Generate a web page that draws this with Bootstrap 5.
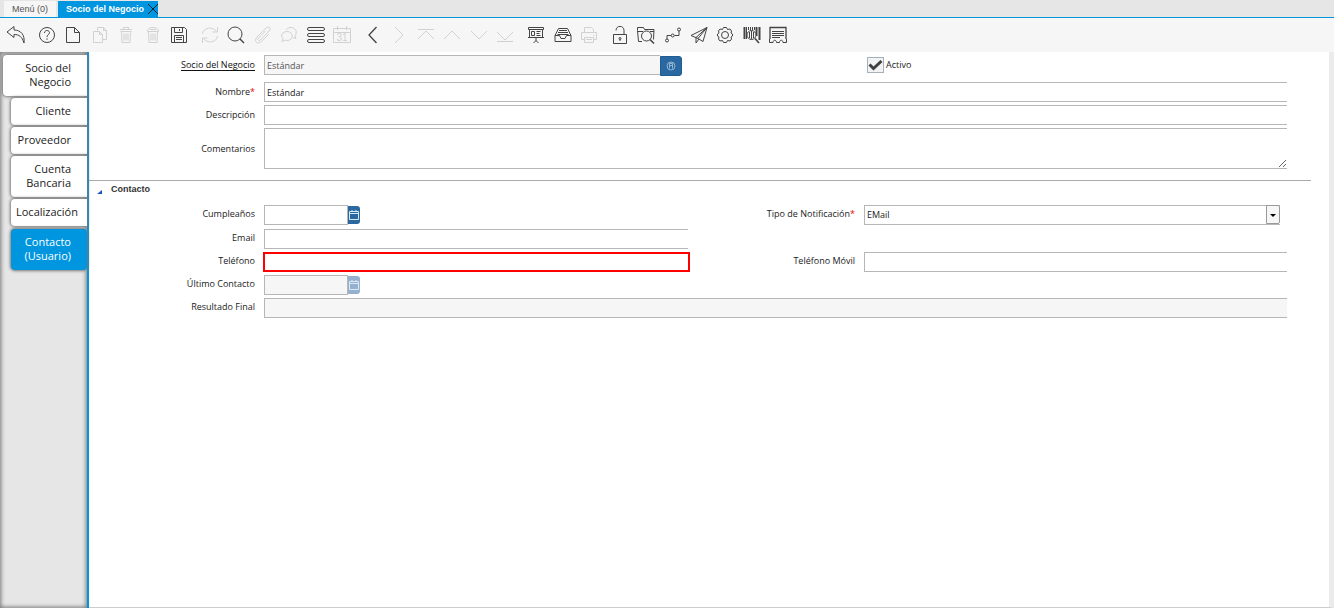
<!DOCTYPE html>
<html lang="es">
<head>
<meta charset="utf-8">
<meta name="viewport" content="width=device-width, initial-scale=1">
<title>Socio del Negocio</title>
<link href="https://cdn.jsdelivr.net/npm/bootstrap@5.3.0/dist/css/bootstrap.min.css" rel="stylesheet">
<style>
:root { --accent: #0095df; --line: #b6b6b6; }
body { font-family: "Open Sans", "Noto Sans", sans-serif; font-size: 9px; line-height: 14px; color: #222; background: #fff; }
button { color: inherit; }
.desk-tabs { height: 18px; padding: 1px 4px 0; gap: 2px; background: #e6e6e6; border-bottom: 1px solid var(--accent); font-family: "Liberation Sans", Arial, sans-serif; }
.desk-tab { border: 0; background: #f6f6f6; color: #555; padding: 0 8px; line-height: 16px; }
.desk-tab.active { background: var(--accent); color: #fff; font-weight: bold; padding-right: 0; }
.desk-tab svg { width: 10px; height: 10px; stroke: #123; }
.toolbar { height: 34px; padding: 0 7px; gap: 13px; background: #f6f6f6; }
.tool-group { width: 150px; }
.tool-group.one { width: 18px; }
.tool-group.three { width: 71px; }
.tool-group.seven { width: 176px; }
.tool { width: 18px; height: 18px; padding: 0; border: 0; background: none; display: block; }
.tool svg { display: block; width: 18px; height: 18px; fill: none; stroke: #444; overflow: visible; }
.tool:disabled { opacity: .2; }
.side { width: 89px; padding: 3px 0 0 3px; gap: 2px; background: #e6e6e6; border-right: 2px solid var(--accent); box-shadow: inset 0 0 4px 1px #777; }
.side-tab { display: block; margin-left: 8px; padding: 6px 16px 7px 5px; border-radius: 4px 0 0 4px; background: #fff; color: #222; font-size: 11px; line-height: 14px; text-align: right; text-decoration: none; box-shadow: 0 0 3px 1px #777; }
.side-tab:first-child { margin-left: 0; padding-left: 16px; }
.side-tab.active { background: var(--accent); color: #fff; border-radius: 4px; margin-top: 1px; -webkit-text-stroke: 0; }
.work { border-right: 5px solid #ebebeb; border-bottom: 1px solid #ccc; }
.sheet { padding-right: 42px; }
.sheet.first { padding-top: 3px; padding-bottom: 11px; }
.form-grid { display: grid; grid-template-columns: 175fr 424fr 176fr 423fr; row-gap: 3px; align-items: center; }
.sheet.first .form-grid { grid-template-rows: 24px; }
.sheet.second .form-grid { grid-template-rows: 21px; }
.sheet.second .form-grid > * { align-self: start; }
.sheet.second .form-grid > label { padding-top: 2px; }
.head-cell { align-self: start; padding-top: 3px; }
.head-cell.tick-cell { padding-top: 2px; }
.span-all { grid-column: 2 / -1; }
.form-grid > label, .form-grid > .lbl { text-align: right; padding-right: 9px; }
.lbl a { color: #111; text-decoration: underline; text-underline-offset: 2px; }
.req { color: #e00; }
.fld { display: block; width: 100%; height: 20px; padding: 0 2px; border: 1px solid var(--line); border-right: 0; border-radius: 0; background: #fff; color: #222; outline: 0; }
.fld:disabled { background: #f6f6f6; color: #555; opacity: 1; }
textarea.fld { height: 41px; resize: vertical; }
.fld.focused { border: 2px solid #f00; width: calc(100% + 3px); margin-left: -1px; }
.search-field { width: 418px; align-self: start; }
.addon { height: 20px; padding: 0; border: 1px solid #1f5c92; border-radius: 0 3px 3px 0; background: #2a68a2; flex: none; }
.addon.find { width: 22px; margin-top: 1px; }
.addon.date { width: 12px; height: 18px; border: 0; }
.addon svg { display: block; margin: auto; fill: none; stroke: #dbe9f5; }
.addon:disabled { background: #94b2d0; }
.date-field { width: 96px; }
.date-field .fld { border-right: 1px solid var(--line); }
.tick { appearance: none; width: 17px; height: 16px; margin: 0 2px 0 3px; border: 1px solid #a3b1bd; background: #f2f2f2 url("data:image/svg+xml,%3Csvg xmlns='http://www.w3.org/2000/svg' viewBox='0 0 15 14'%3E%3Cpath d='M1.5 6.5 5.500 10.500 13.500 3' fill='none' stroke='%23404040' stroke-width='3'/%3E%3C/svg%3E") center / 100% 100%; }
.section-title { height: 25px; margin-right: 18px; padding: 1px 0 0 8px; border-top: 1px solid #aaa; font-family: "Liberation Sans", Arial, sans-serif; font-weight: bold; color: #333; }
.section-title button { border: 0; background: none; padding: 0; font-weight: bold; display: flex; align-items: center; gap: 9px; }
.section-title i { margin-top: 5px; border: solid transparent; border-width: 4px 0 0 5px; border-bottom: 4px solid #1c55c8; border-top: 0; }
.combo { width: calc(100% - 7px); }
.combo select { appearance: none; border-right: 0; }
.combo span { right: 0; top: 0; width: 14px; height: 19px; border: 1px solid #999; border-radius: 0 2px 2px 0; background: #f6f6f6; pointer-events: none; }
.combo span::after { content: ""; position: absolute; left: 3px; top: 8px; border: 3px solid transparent; border-top-color: #000; border-bottom: 0; }
.shell { margin-bottom: 2px; }
</style>
</head>
<body class="d-flex flex-column min-vh-100">
<nav class="desk-tabs d-flex" aria-label="Ventanas">
  <button class="desk-tab" type="button">Menú (0)</button>
  <button class="desk-tab active d-flex align-items-center" type="button">Socio del Negocio <svg viewBox="0 0 10 10" class="ms-1" aria-hidden="true"><path d="M0 0 10 10M10 0 0 10"/></svg></button>
</nav>

<header class="toolbar d-flex align-items-center">
  <div class="tool-group one">
    <button class="tool" type="button" aria-label="Deshacer"><svg viewBox="0 0 18 18"><path d="M7 .5 0 6l7 5.500V8.500c5 0 8 2 10 8.500C18 9 14 4 7 4z"/></svg></button>
  </div>
  <div class="tool-group d-flex justify-content-between">
    <button class="tool" type="button" aria-label="Ayuda"><svg viewBox="0 0 18 18"><circle cx="9" cy="9" r="7.500"/><path d="M6.500 7c0-3.500 5-3 5-.3C11.500 8.500 9 8.500 9 11M9 12.300v1.500"/></svg></button>
    <button class="tool" type="button" aria-label="Nuevo"><svg viewBox="0 0 18 18"><path d="M2.500 1.500h8l5 5v10h-13zM10.500 1.500v5h5"/></svg></button>
    <button class="tool" type="button" aria-label="Copiar" disabled><svg viewBox="0 0 18 18"><path d="M6.500 4.500v-3h6l3 3v9h-4M12.500 1.500v3h3M2.500 5.500h6l3 3v8h-9zM8.500 5.500v3h3"/></svg></button>
    <button class="tool" type="button" aria-label="Borrar" disabled><svg viewBox="0 0 18 18"><path d="M3 3.500h12M6.500 3V1.500h5V3M3.500 5.500h11M4.500 5.500l.5 11h8l.5-11M7 7.500v7M9 7.500v7M11 7.500v7"/></svg></button>
    <button class="tool" type="button" aria-label="Borrar selección" disabled><svg viewBox="0 0 18 18"><path d="M3.500 5.500c0-3 2-4 5.500-4s5.500 1 5.500 4zM4.500 5.500l.5 11h8l.5-11M7 7.500v7M9 7.500v7M11 7.500v7M6 3.500h6"/></svg></button>
    <button class="tool" type="button" aria-label="Guardar"><svg viewBox="0 0 18 18"><path d="M1.500 1.500h13l2 2v13h-15zM4.500 1.500v5h8v-5M9.500 3v2M4.500 16v-6.500h9V16M6 11.500h6M6 13.500h6"/></svg></button>
  </div>
  <div class="tool-group d-flex justify-content-between">
    <button class="tool" type="button" aria-label="Refrescar" disabled><svg viewBox="0 0 18 18"><path d="M1.500 8C2 1.500 12 0 15.500 5.500M16.500 1v5h-5M16.500 10C16 16.500 6 18 2.500 12.500M1.500 17v-5h5"/></svg></button>
    <button class="tool" type="button" aria-label="Buscar"><svg viewBox="0 0 18 18"><circle cx="8" cy="8" r="7"/><path d="m13 13 4 4" stroke-width="1.500"/></svg></button>
    <button class="tool" type="button" aria-label="Adjunto" disabled><svg viewBox="0 0 18 18"><path d="m11.500 5-7 7c-1.500 2 .5 3.500 2 2l8.500-9C18 1.500 14 0 12 2L3 11c-4 5 1 8 4.500 4.500L15 8"/></svg></button>
    <button class="tool" type="button" aria-label="Chat" disabled><svg viewBox="0 0 18 18"><path d="M6 4c3-5 12-2 10 4-.5 1.500-1 2-1 2l1 2.500-3-1M7 5.500c7 0 7 9 0 9-1 0-2-.3-2-.3L2 15.500l1-3c-3-3-.5-7 4-7z"/></svg></button>
    <button class="tool" type="button" aria-label="Rejilla"><svg viewBox="0 0 18 18"><rect x=".5" y="1.500" width="17" height="3" rx="1.500"/><rect x=".5" y="7.500" width="17" height="3" rx="1.500"/><rect x=".5" y="13.500" width="17" height="3" rx="1.500"/></svg></button>
    <button class="tool" type="button" aria-label="Calendario" disabled><svg viewBox="0 0 18 18"><path d="M.5 2.500h17v14H.5zM.5 6.500h17M4.500 0v4M13.500 0v4"/><text x="9" y="15" font-size="10" text-anchor="middle" font-family="Liberation Sans" fill="#333" stroke="none">31</text></svg></button>
  </div>
  <div class="tool-group d-flex justify-content-between">
    <button class="tool" type="button" aria-label="Anterior"><svg viewBox="0 0 18 18"><path d="M12.500 1 5 9l7.500 8" stroke-width="1.300"/></svg></button>
    <button class="tool" type="button" aria-label="Detalle" disabled><svg viewBox="0 0 18 18"><path d="m5 1 8 8-8 8"/></svg></button>
    <button class="tool" type="button" aria-label="Primero" disabled><svg viewBox="0 0 18 18"><path d="M1 3.500h16M1 13l8-8 8 8"/></svg></button>
    <button class="tool" type="button" aria-label="Registro previo" disabled><svg viewBox="0 0 18 18"><path d="m1 13 8-8 8 8"/></svg></button>
    <button class="tool" type="button" aria-label="Siguiente" disabled><svg viewBox="0 0 18 18"><path d="m1 5 8 8 8-8"/></svg></button>
    <button class="tool" type="button" aria-label="Último" disabled><svg viewBox="0 0 18 18"><path d="m1 6 8 8 8-8M1 15.500h16"/></svg></button>
  </div>
  <div class="tool-group three d-flex justify-content-between">
    <button class="tool" type="button" aria-label="Informe"><svg viewBox="0 0 18 18"><path d="M1.500 1.500h15v2h-15zM2.500 3.500v8h13v-8M1 11.500h16M9 12v3M6.500 17 9 14.500l2.500 2.500M4.500 5.500h3v4h-3zM9.500 5.500h4M9.500 7.500h3M9.500 9.500h4"/></svg></button>
    <button class="tool" type="button" aria-label="Archivo"><svg viewBox="0 0 18 18"><path d="M1 9.500 4.500 2.500h9L17 9.500v6H1zM1 9.500h4.500l1.500 3h4l1.500-3H17M5 4.500h8M4 6.500h10M3.500 8.500h11"/></svg></button>
    <button class="tool" type="button" aria-label="Imprimir" disabled><svg viewBox="0 0 18 18"><path d="M4.500 7V1.500h7l2 2V7M4.500 13.500h-3v-7h15v7h-3M4.500 11.500h9v5h-9zM6 13.500h6M13 9.500h1.500"/></svg></button>
  </div>
  <div class="tool-group seven d-flex justify-content-between">
    <button class="tool" type="button" aria-label="Bloqueo"><svg viewBox="0 0 18 18"><path d="M2.500 8.500h13v9h-13zM5 4.500C5-1 13-1 13 4.500v4"/><circle cx="9" cy="12.500" r="1"/><path d="M9 13v2"/></svg></button>
    <button class="tool" type="button" aria-label="Explorar"><svg viewBox="0 0 18 18"><path d="M5 15.500H1.500L.5 4.500v-3h6l1 2h9.500l-.5 10M.5 5.500H6M13 5.500h4"/><circle cx="9.500" cy="10" r="5"/><path d="m13 13.500 4 4" stroke-width="1.600"/></svg></button>
    <button class="tool" type="button" aria-label="Flujo de trabajo"><svg viewBox="0 0 18 18"><path d="M3 13V9.500h4M10.500 9.500H15V5"/><circle cx="3" cy="14.500" r="1.500"/><circle cx="8.700" cy="9.500" r="1.500"/><circle cx="15" cy="3.500" r="1.500"/></svg></button>
    <button class="tool" type="button" aria-label="Solicitudes"><svg viewBox="0 0 18 18"><path d="M1 9.500 17 1.500l-4 14-5-3zM17 1.500l-11 10v5.500l3-4M8 12.500l9-11"/></svg></button>
    <button class="tool" type="button" aria-label="Procesos"><svg viewBox="0 0 18 18"><path d="M7.500 1.500h3l1 2 2.500-.5 1.500 2-.5 2 1.500 1v2l-1.500 1 .5 2-1.500 2-2.500-.5-1 2h-3l-1-2-2.500.5-1.500-2 .5-2-1.500-1V8L3 7l-.5-2L4 3l2.500.5z"/><circle cx="9" cy="9" r="3.500"/></svg></button>
    <button class="tool" type="button" aria-label="Producto"><svg viewBox="0 0 18 18"><path d="M1.500 1v12M16.500 1v13M13.500 1v9" stroke-width="2"/><path d="M3.500 1v12M5.500 1v3M7.500 1v3M9.500 1v3M11.500 1v3"/><circle cx="8.500" cy="9" r="4.500" fill="#f6f6f6"/><path d="M6.500 6v6M8.500 5v8M10.500 6v6"/><path d="m12 12.500 4 4.500" stroke-width="1.600"/></svg></button>
    <button class="tool" type="button" aria-label="Recibo"><svg viewBox="0 0 18 18"><path d="M1 13V1.500h16V13" stroke-width="1.300"/><path d="M3 5.500h12M3 7.500h12M3 9.500h12M3 11.500h8"/><path d="M.5 13v3.500H4c0-3 3.500-3 3.500 0h3c0-3 3.500-3 3.500 0h3.500V13"/></svg></button>
  </div>
</header>

<div class="shell d-flex flex-grow-1">
  <nav class="side d-flex flex-column flex-shrink-0" aria-label="Pestañas">
    <a class="side-tab" href="#">Socio del Negocio</a>
    <a class="side-tab" href="#">Cliente</a>
    <a class="side-tab" href="#">Proveedor</a>
    <a class="side-tab" href="#">Cuenta Bancaria</a>
    <a class="side-tab" href="#">Localización</a>
    <a class="side-tab active" href="#" aria-current="page">Contacto (Usuario)</a>
  </nav>
  <main class="work flex-grow-1">
    <form>
      <div class="sheet first">
        <div class="form-grid">
          <div class="lbl head-cell"><a href="#">Socio del Negocio</a></div>
          <div class="search-field d-flex">
            <input class="fld" type="text" value="Estándar" aria-label="Socio del Negocio" disabled>
            <button class="addon find" type="button" aria-label="Buscar socio"><svg width="10" height="10" viewBox="0 0 10 10" opacity=".6"><circle cx="5" cy="5" r="4"/><path d="M3.500 7.500v-5h3v5M3.500 4.500h3"/></svg></button>
          </div>
          <span></span>
          <div class="head-cell tick-cell d-flex align-items-center">
            <input class="tick" type="checkbox" id="activo" checked><label for="activo">Activo</label>
          </div>
          <label for="nombre">Nombre<span class="req">*</span></label>
          <div class="span-all"><input class="fld" id="nombre" type="text" value="Estándar"></div>
          <label for="desc">Descripción</label>
          <div class="span-all"><input class="fld" id="desc" type="text"></div>
          <label for="com">Comentarios</label>
          <div class="span-all"><textarea class="fld" id="com"></textarea></div>
        </div>
      </div>
      <div class="section-title"><button type="button"><i></i>Contacto</button></div>
      <div class="sheet second">
        <div class="form-grid">
          <label for="cumple">Cumpleaños</label>
          <div class="date-field d-flex align-items-center">
            <input class="fld" id="cumple" type="text">
            <button class="addon date" type="button" aria-label="Elegir fecha"><svg width="10" height="12" viewBox="0 0 10 12"><path d="M.5 2.500h9v8h-9zM0 4.500h10M3 1v2M7 1v2"/></svg></button>
          </div>
          <label for="tipo">Tipo de Notificación<span class="req">*</span></label>
          <div class="combo position-relative">
            <select class="fld" id="tipo"><option>EMail</option></select><span class="position-absolute"></span>
          </div>
          <label for="email">Email</label>
          <input class="fld" id="email" type="email">
          <span></span><span></span>
          <label for="tel">Teléfono</label>
          <input class="fld focused" id="tel" type="tel">
          <label for="movil">Teléfono Móvil</label>
          <input class="fld" id="movil" type="tel">
          <label for="ultimo">Último Contacto</label>
          <div class="date-field d-flex align-items-center">
            <input class="fld" id="ultimo" type="text" disabled>
            <button class="addon date" type="button" aria-label="Elegir fecha" disabled><svg width="10" height="12" viewBox="0 0 10 12"><path d="M.5 2.500h9v8h-9zM0 4.500h10M3 1v2M7 1v2"/></svg></button>
          </div>
          <span></span><span></span>
          <label for="res">Resultado Final</label>
          <div class="span-all"><input class="fld" id="res" type="text" disabled></div>
        </div>
      </div>
    </form>
  </main>
</div>
</body>
</html>
